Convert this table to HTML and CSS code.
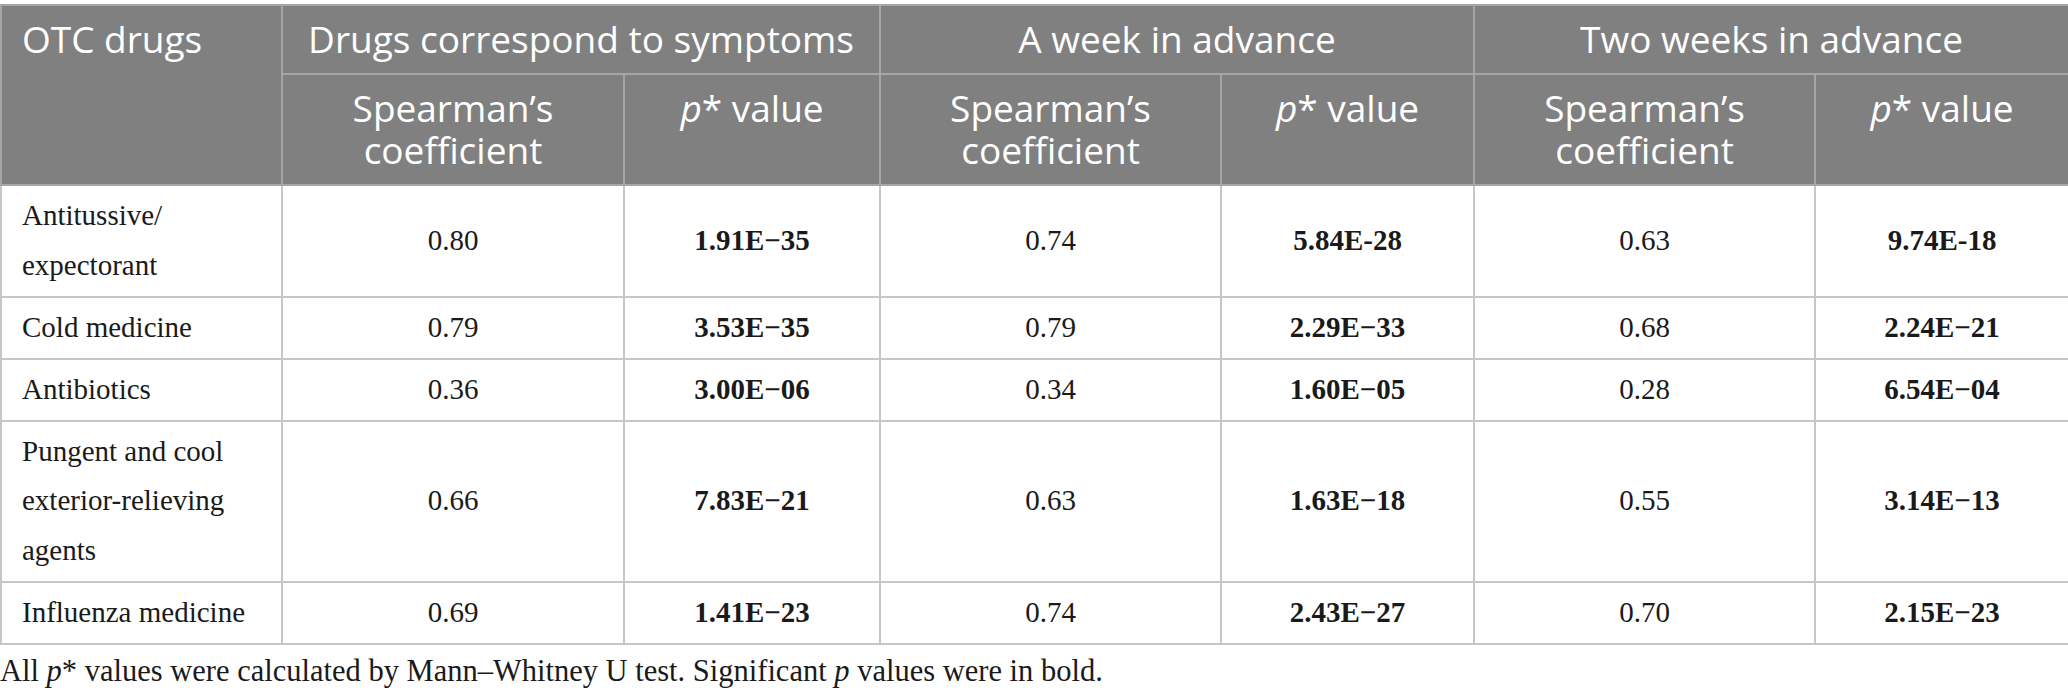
FILE: index.html
```html
<!DOCTYPE html>
<html>
<head>
<meta charset="utf-8">
<link rel="stylesheet" href="styles.css">
</head>
<body>
<div class="page">
<table class="data">
  <colgroup>
    <col class="c1"><col class="c2"><col class="c3"><col class="c4"><col class="c5"><col class="c6"><col class="c7">
  </colgroup>
  <thead>
    <tr class="h1">
      <th rowspan="2" class="left">OTC drugs</th>
      <th colspan="2">Drugs correspond to symptoms</th>
      <th colspan="2">A week in advance</th>
      <th colspan="2">Two weeks in advance</th>
    </tr>
    <tr class="h2">
      <th>Spearman’s<br>coefficient</th>
      <th><i>p</i>* value</th>
      <th>Spearman’s<br>coefficient</th>
      <th><i>p</i>* value</th>
      <th>Spearman’s<br>coefficient</th>
      <th><i>p</i>* value</th>
    </tr>
  </thead>
  <tbody>
    <tr>
      <td class="left">Antitussive/<br>expectorant</td>
      <td>0.80</td><td><b>1.91E−35</b></td>
      <td>0.74</td><td><b>5.84E-28</b></td>
      <td>0.63</td><td><b>9.74E-18</b></td>
    </tr>
    <tr>
      <td class="left">Cold medicine</td>
      <td>0.79</td><td><b>3.53E−35</b></td>
      <td>0.79</td><td><b>2.29E−33</b></td>
      <td>0.68</td><td><b>2.24E−21</b></td>
    </tr>
    <tr>
      <td class="left">Antibiotics</td>
      <td>0.36</td><td><b>3.00E−06</b></td>
      <td>0.34</td><td><b>1.60E−05</b></td>
      <td>0.28</td><td><b>6.54E−04</b></td>
    </tr>
    <tr>
      <td class="left">Pungent and cool<br>exterior-relieving<br>agents</td>
      <td>0.66</td><td><b>7.83E−21</b></td>
      <td>0.63</td><td><b>1.63E−18</b></td>
      <td>0.55</td><td><b>3.14E−13</b></td>
    </tr>
    <tr>
      <td class="left">Influenza medicine</td>
      <td>0.69</td><td><b>1.41E−23</b></td>
      <td>0.74</td><td><b>2.43E−27</b></td>
      <td>0.70</td><td><b>2.15E−23</b></td>
    </tr>
  </tbody>
</table>
<p class="note">All <i>p</i>* values were calculated by Mann–Whitney U test. Significant <i>p</i> values were in bold.</p>
</div>
</body>
</html>
```
FILE: styles.css
```css
html, body {
  margin: 0;
  padding: 0;
  background: #ffffff;
}
.page {
  padding-top: 4px;
  width: 2068px;
}
.data {
  border-collapse: collapse;
  table-layout: fixed;
  width: 2068px;
  border: 2px solid #c4c4c4;
}
.c1 { width: 281px; }
.c2 { width: 342px; }
.c3 { width: 256px; }
.c4 { width: 341px; }
.c5 { width: 253px; }
.c6 { width: 341px; }
.c7 { width: 254px; }
.data th {
  background: #7f807f;
  color: #ffffff;
  font-family: "Open Sans", "Liberation Sans", sans-serif;
  font-weight: 400;
  font-size: 37px;
  line-height: 42px;
  padding: 12px 10px 13px;
  text-align: center;
  vertical-align: top;
  border: 2px solid #a6a6a6;
}
.data th i {
  font-style: italic;
}
.data th.left {
  text-align: left;
  padding-left: 20px;
}
.data td {
  font-family: "Liberation Serif", "Times New Roman", serif;
  font-size: 29px;
  line-height: 49.5px;
  color: #1a1a1a;
  padding: 5px 10px 5.5px;
  text-align: center;
  vertical-align: middle;
  border: 2px solid #c6c6c6;
}
.data td.left {
  text-align: left;
  padding-left: 20px;
}
.data td b {
  font-weight: 700;
}
.note {
  margin: 8px 0 0;
  font-family: "Liberation Serif", "Times New Roman", serif;
  font-size: 30.5px;
  line-height: 36px;
  color: #1a1a1a;
}
```
